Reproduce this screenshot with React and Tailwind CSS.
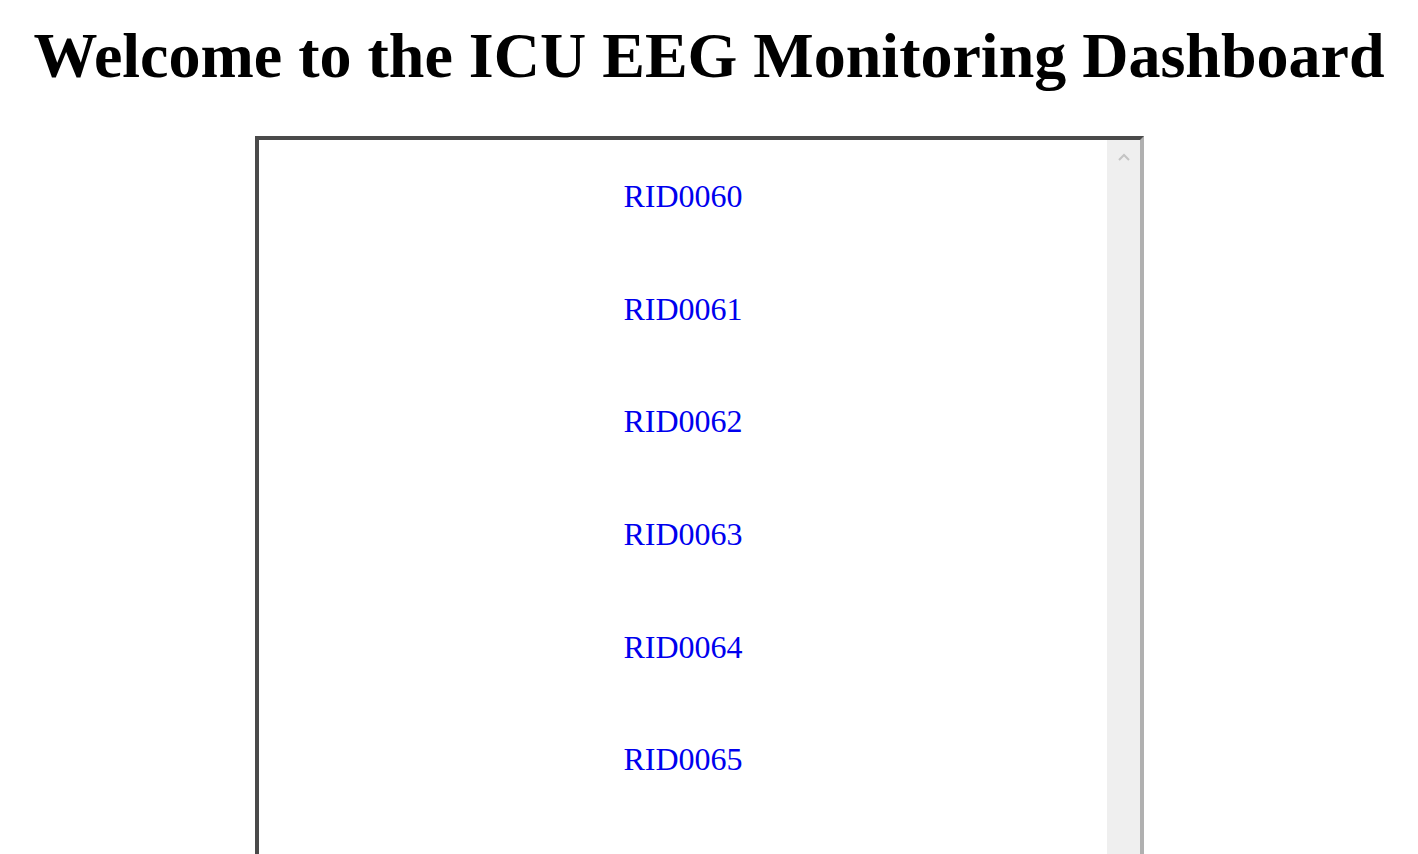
import React from 'react';

const patients = ['RID0060', 'RID0061', 'RID0062', 'RID0063', 'RID0064', 'RID0065'];

export default function App() {
    return (
        <div className="h-[854px] overflow-hidden bg-white font-['Liberation_Serif',serif] text-black">
            <h1 className="pt-[19px] text-center text-[64px] font-bold leading-[74px]">
                Welcome to the ICU EEG Monitoring Dashboard
            </h1>
            <div className="ml-[255px] mt-[43px] flex h-[760px] w-[889px] border-4 border-t-[#4a4a4a] border-l-[#4a4a4a] border-r-[#b0b0b0] border-b-[#b0b0b0]">
                <div className="flex-1 overflow-hidden">
                    {patients.map((id) => (
                        <div key={id} className="flex h-[112.6px] items-center justify-center">
                            <a href="#" className="text-[32px] leading-none text-[#0000ee] no-underline">
                                {id}
                            </a>
                        </div>
                    ))}
                </div>
                {/* fake scrollbar */}
                <div className="flex w-[33px] justify-center bg-[#efefef] pt-[13px]">
                    <svg width="12" height="8" viewBox="0 0 12 8">
                        <path d="M1 7 L6 2 L11 7" fill="none" stroke="#c4c4c4" strokeWidth="2" />
                    </svg>
                </div>
            </div>
        </div>
    );
}
